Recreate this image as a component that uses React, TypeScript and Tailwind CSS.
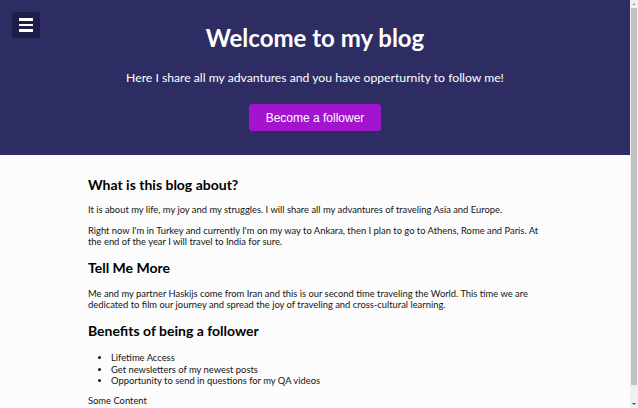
const BENEFITS = [
  'Lifetime Access',
  'Get newsletters of my newest posts',
  'Opportunity to send in questions for my QA videos',
]

const MenuButton = () => (
  <button
    type="button"
    aria-label="Menu"
    className="absolute left-3 top-3 flex h-[26px] w-[28px] flex-col items-center justify-center gap-[3px] rounded-[3px] bg-[#1e1d47]"
  >
    <span className="block h-[2.5px] w-[14px] bg-white" />
    <span className="block h-[2.5px] w-[14px] bg-white" />
    <span className="block h-[2.5px] w-[14px] bg-white" />
  </button>
)

// window scrollbar as seen in the capture
const ScrollBar = () => (
  <div aria-hidden="true" className="flex h-screen w-2 shrink-0 flex-col items-center bg-[#f0f0f0]">
    <svg width="8" height="8" viewBox="0 0 8 8" className="shrink-0">
      <path d="M2 5h4L4 3z" fill="#a3a3a3" />
    </svg>
    <div className="h-[377px] w-[6px] shrink-0 bg-[#c2c2c2]" />
    <div className="flex-1" />
    <svg width="8" height="8" viewBox="0 0 8 8" className="shrink-0">
      <path d="M2 3h4L4 5z" fill="#505050" />
    </svg>
  </div>
)

export default function App() {
  return (
    <div className="flex h-screen overflow-hidden bg-[#fcfcfc] font-['Lato','Noto_Sans',sans-serif] text-[#151515]">
      <div className="min-w-0 flex-1">
        <header className="relative flex h-[155px] flex-col items-center bg-[#2e2d63] pt-[23px] text-white">
          <MenuButton />
          <h1 className="text-[24px] font-bold leading-[30px]">Welcome to my blog</h1>
          <p className="mt-[17px] text-[12.2px] leading-[15px]">
            Here I share all my advantures and you have opperturnity to follow me!
          </p>
          <button
            type="button"
            className="mt-[19px] flex h-[27px] w-[132px] items-center justify-center rounded-[3px] bg-[#a314cf] font-['Liberation_Sans',Arial,sans-serif] text-[12px] text-white"
          >
            Become a follower
          </button>
        </header>

        <main className="ml-[88px] w-[451px] pt-[21px] pb-[18px]">
          <h2 className="text-[14px] font-bold leading-[17px] text-black">What is this blog about?</h2>
          <p className="mt-[11px] text-[9.4px] leading-[11px]">
            It is about my life, my joy and my struggles. I will share all my advantures of traveling Asia and Europe.
          </p>
          <p className="mt-[10px] text-[9.4px] leading-[11px]">
            Right now I'm in Turkey and currently I'm on my way to Ankara, then I plan to go to Athens, Rome and Paris. At the
            end of the year I will travel to India for sure.
          </p>

          <h2 className="mt-[12px] text-[14px] font-bold leading-[17px] text-black">Tell Me More</h2>
          <p className="mt-[12px] text-[9.4px] leading-[11px]">
            Me and my partner Haskijs come from Iran and this is our second time traveling the World. This time we are
            dedicated to film our journey and spread the joy of traveling and cross-cultural learning.
          </p>

          <h2 className="mt-[12px] text-[14px] font-bold leading-[17px] text-black">Benefits of being a follower</h2>
          <ul className="mt-[13px] list-disc pl-[23px] text-[9.4px] leading-[11.5px]">
            {BENEFITS.map((item) => (
              <li key={item}>{item}</li>
            ))}
          </ul>

          <p className="mt-[8px] text-[9.4px] leading-[11px]">Some Content</p>
        </main>
      </div>
      <ScrollBar />
    </div>
  )
}
